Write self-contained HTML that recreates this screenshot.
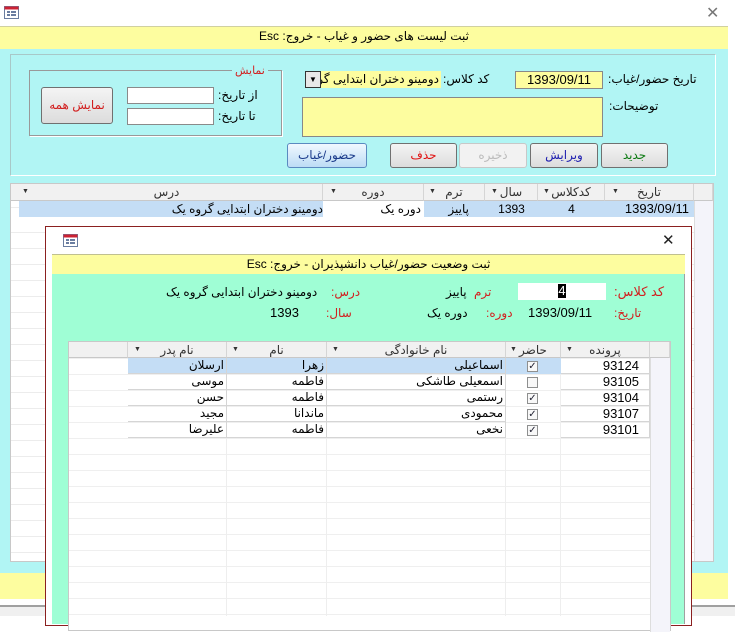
<!DOCTYPE html>
<html><head><meta charset="utf-8"><style>
*{margin:0;padding:0;box-sizing:border-box}
body{width:735px;height:616px;overflow:hidden;position:relative;background:#fff;font-family:"Liberation Sans","DejaVu Sans",sans-serif;font-size:12px;color:#000}
.a{position:absolute}
.t{position:absolute;white-space:nowrap;direction:rtl}
.red{color:#d21f1f}
.inp{position:absolute;background:#fff;border:1px solid #8a8a8a}
.btn{position:absolute;border:1px solid #707070;border-radius:3px;background:linear-gradient(#f4f4f4,#dcdcdc);text-align:center;line-height:23px;direction:rtl}
.hd{position:absolute;background:#f1f1f1;border-right:1px solid #d5d5d5;border-bottom:1px solid #c8c8c8;text-align:center;color:#333;line-height:16px}
.arr{position:absolute;font-size:7px;color:#333}
.cell{position:absolute;border-right:1px solid #d5d5d5;border-bottom:1px solid #d5d5d5;line-height:15px;white-space:nowrap;overflow:hidden}
.cb{position:absolute;width:11px;height:11px;border:1px solid #8e8f8f;background:#f8f8f8;font-size:10px;line-height:9px;text-align:center;color:#223}
</style></head><body>
<svg class="a" style="left:4px;top:6px" width="16" height="14"><rect x="0.5" y="0.5" width="14" height="12" fill="#fff" stroke="#6a7da0"/><rect x="0.5" y="0.5" width="14" height="3" fill="#c23"/><rect x="3" y="5" width="3" height="2" fill="#6a7da0"/><rect x="7" y="5" width="5" height="2" fill="#6a7da0"/><rect x="3" y="8" width="3" height="2" fill="#6a7da0"/><rect x="7" y="8" width="5" height="2" fill="#6a7da0"/></svg>
<div class="a" style="left:706px;top:3px;font-size:16px;color:#777">✕</div>
<div class="a" style="left:0;top:26px;width:728px;height:23px;background:#fdfd9f;border-top:1px solid #d0d0a0"></div>
<div class="t" style="left:0;width:728px;top:29px;text-align:center;direction:rtl">ثبت لیست های حضور و غیاب - خروج: Esc</div>
<div class="a" style="left:0;top:49px;width:728px;height:524px;background:#b1f5f4"></div>
<div class="a" style="left:0;top:573px;width:728px;height:26px;background:#fdfd9f"></div>
<div class="a" style="left:0;top:605px;width:735px;height:11px;background:#f0f0f0;border-top:2px solid #a0a0a0"></div>
<div class="a" style="left:10px;top:54px;width:706px;height:122px;border:1px solid #a8c8c8;border-right-color:#fff;border-bottom-color:#fff"></div>
<div class="a" style="left:29px;top:70px;width:253px;height:66px;border:1px solid #999;box-shadow:1px 1px 0 #fff"></div>
<div class="t red" style="left:232px;top:64px;background:#b1f5f4;padding:0 3px;font-size:11px">نمایش</div>
<div class="btn red" style="left:41px;top:87px;width:72px;height:37px;line-height:35px">نمایش همه</div>
<div class="inp" style="left:127px;top:87px;width:87px;height:17px"></div>
<div class="inp" style="left:127px;top:108px;width:87px;height:17px"></div>
<div class="t" style="left:218px;top:88px">از تاریخ:</div>
<div class="t" style="left:218px;top:109px">تا تاریخ:</div>
<div class="t" style="left:608px;top:72px">تاریخ حضور/غیاب:</div>
<div class="a" style="left:515px;top:71px;width:88px;height:18px;background:#fdfd9f;border:1px solid #888;text-align:center;line-height:16px;font-size:13px">1393/09/11</div>
<div class="t" style="left:443px;top:72px">کد کلاس:</div>
<div class="a" style="left:305px;top:71px;width:136px;height:17px;background:#fdfd9f;overflow:hidden"><div class="t" style="right:2px;top:1px">دومینو دختران ابتدایی گروه</div></div>
<div class="a" style="left:305px;top:71px;width:16px;height:17px;background:#e8e8e8;border:1px solid #333;font-size:8px;text-align:center;line-height:15px">▼</div>
<div class="t" style="left:609px;top:99px">توضیحات:</div>
<div class="a" style="left:302px;top:97px;width:301px;height:40px;background:#fdfd9f;border:1px solid #888"></div>
<div class="btn" style="left:601px;top:143px;width:67px;height:25px;color:#0a7a10">جدید</div>
<div class="btn" style="left:530px;top:143px;width:68px;height:25px;color:#2020b0">ویرایش</div>
<div class="btn" style="left:459px;top:143px;width:68px;height:25px;color:#bbb;background:#f2f2f2;border-color:#c8c8c8">ذخیره</div>
<div class="btn" style="left:390px;top:143px;width:67px;height:25px;color:#e01010">حذف</div>
<div class="btn" style="left:287px;top:143px;width:80px;height:25px;color:#1a3a8a;background:linear-gradient(#f0f8ff,#bcdcf5);border-color:#5a8ac0">حضور/غیاب</div>
<div class="a" style="left:10px;top:183px;width:704px;height:379px;background:#fff;border:1px solid #c8c8c8;background-image:repeating-linear-gradient(#fff 0,#fff 15px,#ececec 15px,#ececec 16px);background-position:0 33px"></div>
<div class="a" style="left:694px;top:184px;width:19px;height:377px;background:#f4f4fa;border-left:1px solid #ddd"></div>
<div class="hd" style="left:11px;top:184px;width:312px;height:17px">درس</div>
<div class="hd" style="left:323px;top:184px;width:101px;height:17px">دوره</div>
<div class="hd" style="left:424px;top:184px;width:61px;height:17px">ترم</div>
<div class="hd" style="left:485px;top:184px;width:53px;height:17px">سال</div>
<div class="hd" style="left:538px;top:184px;width:67px;height:17px">کدکلاس</div>
<div class="hd" style="left:605px;top:184px;width:89px;height:17px">تاریخ</div>
<div class="hd" style="left:694px;top:184px;width:19px;height:17px"></div>
<div class="arr" style="left:22px;top:188px">▼</div><div class="arr" style="left:330px;top:188px">▼</div><div class="arr" style="left:429px;top:188px">▼</div><div class="arr" style="left:491px;top:188px">▼</div><div class="arr" style="left:543px;top:188px">▼</div><div class="arr" style="left:612px;top:188px">▼</div>
<div class="a" style="left:19px;top:201px;width:675px;height:16px;background:#c4ddf5"></div>
<div class="a" style="left:323px;top:201px;width:101px;height:16px;background:#fff"></div>
<div class="t" style="right:412px;top:202px">دومینو دختران ابتدایی گروه یک</div>
<div class="t" style="right:314px;top:202px">دوره یک</div>
<div class="t" style="right:266px;top:202px">پاییز</div>
<div class="a" style="left:485px;top:202px;width:53px;text-align:center">1393</div>
<div class="a" style="left:538px;top:202px;width:67px;text-align:center">4</div>
<div class="a" style="left:605px;top:202px;width:84px;text-align:right;font-size:13px;line-height:14px">1393/09/11</div>
<div class="a" style="left:45px;top:226px;width:647px;height:400px;background:#fff;border:1px solid #8b2020"></div>
<svg class="a" style="left:63px;top:234px" width="16" height="14"><rect x="0.5" y="0.5" width="14" height="12" fill="#fff" stroke="#6a7da0"/><rect x="0.5" y="0.5" width="14" height="3" fill="#c23"/><rect x="3" y="5" width="3" height="2" fill="#6a7da0"/><rect x="7" y="5" width="5" height="2" fill="#6a7da0"/><rect x="3" y="8" width="3" height="2" fill="#6a7da0"/><rect x="7" y="8" width="5" height="2" fill="#6a7da0"/></svg>
<div class="a" style="left:662px;top:231px;font-size:15px;font-weight:bold;color:#222">✕</div>
<div class="a" style="left:52px;top:254px;width:633px;height:20px;background:#fdfd9f;border-top:1px solid #c0c090"></div>
<div class="t" style="left:52px;width:633px;top:257px;text-align:center">ثبت وضعیت حضور/غیاب دانشپذیران - خروج: Esc</div>
<div class="a" style="left:52px;top:274px;width:633px;height:350px;background:#9ffed5;border-right:1px solid #a0a0a0"></div>
<div class="t red" style="left:614px;top:284px;font-size:13px">کد کلاس:</div>
<div class="a" style="left:518px;top:283px;width:88px;height:17px;background:#fff"></div>
<div class="a" style="left:558px;top:284px;width:8px;height:14px;background:#000;color:#fff;font-size:13px;line-height:14px;text-align:center">4</div>
<div class="t red" style="left:474px;top:285px">ترم</div>
<div class="t" style="left:446px;top:285px">پاییز</div>
<div class="t red" style="left:331px;top:285px">درس:</div>
<div class="t" style="left:166px;top:285px">دومینو دختران ابتدایی گروه یک</div>
<div class="t red" style="left:614px;top:306px">تاریخ:</div>
<div class="a" style="left:528px;top:305px;font-size:13px">1393/09/11</div>
<div class="t red" style="left:486px;top:306px">دوره:</div>
<div class="t" style="left:427px;top:306px">دوره یک</div>
<div class="t red" style="left:326px;top:306px">سال:</div>
<div class="a" style="left:270px;top:305px;font-size:13px">1393</div>
<div class="a" style="left:68px;top:341px;width:603px;height:290px;background:#fff;border:1px solid #c8c8c8;background-image:repeating-linear-gradient(#fff 0,#fff 15px,#efefef 15px,#efefef 16px);background-position:0 17px"></div>
<div class="a" style="left:650px;top:342px;width:20px;height:290px;background:#f4f4fa;border-left:1px solid #ddd"></div>
<div class="a" style="left:128px;top:358px;width:522px;height:258px;background:linear-gradient(90deg,transparent 98px,#eee 98px,#eee 99px,transparent 99px,transparent 198px,#eee 198px,#eee 199px,transparent 199px,transparent 377px,#eee 377px,#eee 378px,transparent 378px,transparent 432px,#eee 432px,#eee 433px,transparent 433px)"></div>
<div class="hd" style="left:69px;top:342px;width:59px;height:16px"></div>
<div class="hd" style="left:128px;top:342px;width:99px;height:16px">نام پدر</div>
<div class="hd" style="left:227px;top:342px;width:100px;height:16px">نام</div>
<div class="hd" style="left:327px;top:342px;width:179px;height:16px">نام خانوادگی</div>
<div class="hd" style="left:506px;top:342px;width:55px;height:16px">حاضر</div>
<div class="hd" style="left:561px;top:342px;width:89px;height:16px">پرونده</div>
<div class="hd" style="left:650px;top:342px;width:20px;height:16px"></div>
<div class="arr" style="left:134px;top:346px">▼</div><div class="arr" style="left:232px;top:346px">▼</div><div class="arr" style="left:332px;top:346px">▼</div><div class="arr" style="left:510px;top:346px">▼</div><div class="arr" style="left:566px;top:346px">▼</div>
<div class="a" style="left:128px;top:358px;width:378px;height:16px;background:#c4ddf5"></div>
<div class="a" style="left:506px;top:358px;width:55px;height:16px;background:#c4ddf5"></div>
<div class="cell" style="left:128px;top:358px;width:99px;height:16px;text-align:right;padding-right:2px">ارسلان</div>
<div class="cell" style="left:227px;top:358px;width:100px;height:16px;text-align:right;padding-right:2px">زهرا</div>
<div class="cell" style="left:327px;top:358px;width:179px;height:16px;text-align:right;padding-right:2px">اسماعیلی</div>
<div class="cell" style="left:561px;top:358px;width:89px;height:16px;text-align:right;padding-right:10px;font-size:13px">93124</div>
<div class="cb" style="left:527px;top:361px">✓</div>
<div class="cell" style="left:128px;top:374px;width:99px;height:16px;text-align:right;padding-right:2px">موسی</div>
<div class="cell" style="left:227px;top:374px;width:100px;height:16px;text-align:right;padding-right:2px">فاطمه</div>
<div class="cell" style="left:327px;top:374px;width:179px;height:16px;text-align:right;padding-right:2px">اسمعیلی طاشکی</div>
<div class="cell" style="left:561px;top:374px;width:89px;height:16px;text-align:right;padding-right:10px;font-size:13px">93105</div>
<div class="cb" style="left:527px;top:377px"></div>
<div class="cell" style="left:128px;top:390px;width:99px;height:16px;text-align:right;padding-right:2px">حسن</div>
<div class="cell" style="left:227px;top:390px;width:100px;height:16px;text-align:right;padding-right:2px">فاطمه</div>
<div class="cell" style="left:327px;top:390px;width:179px;height:16px;text-align:right;padding-right:2px">رستمی</div>
<div class="cell" style="left:561px;top:390px;width:89px;height:16px;text-align:right;padding-right:10px;font-size:13px">93104</div>
<div class="cb" style="left:527px;top:393px">✓</div>
<div class="cell" style="left:128px;top:406px;width:99px;height:16px;text-align:right;padding-right:2px">مجید</div>
<div class="cell" style="left:227px;top:406px;width:100px;height:16px;text-align:right;padding-right:2px">ماندانا</div>
<div class="cell" style="left:327px;top:406px;width:179px;height:16px;text-align:right;padding-right:2px">محمودی</div>
<div class="cell" style="left:561px;top:406px;width:89px;height:16px;text-align:right;padding-right:10px;font-size:13px">93107</div>
<div class="cb" style="left:527px;top:409px">✓</div>
<div class="cell" style="left:128px;top:422px;width:99px;height:16px;text-align:right;padding-right:2px">علیرضا</div>
<div class="cell" style="left:227px;top:422px;width:100px;height:16px;text-align:right;padding-right:2px">فاطمه</div>
<div class="cell" style="left:327px;top:422px;width:179px;height:16px;text-align:right;padding-right:2px">نخعی</div>
<div class="cell" style="left:561px;top:422px;width:89px;height:16px;text-align:right;padding-right:10px;font-size:13px">93101</div>
<div class="cb" style="left:527px;top:425px">✓</div>
</body></html>
